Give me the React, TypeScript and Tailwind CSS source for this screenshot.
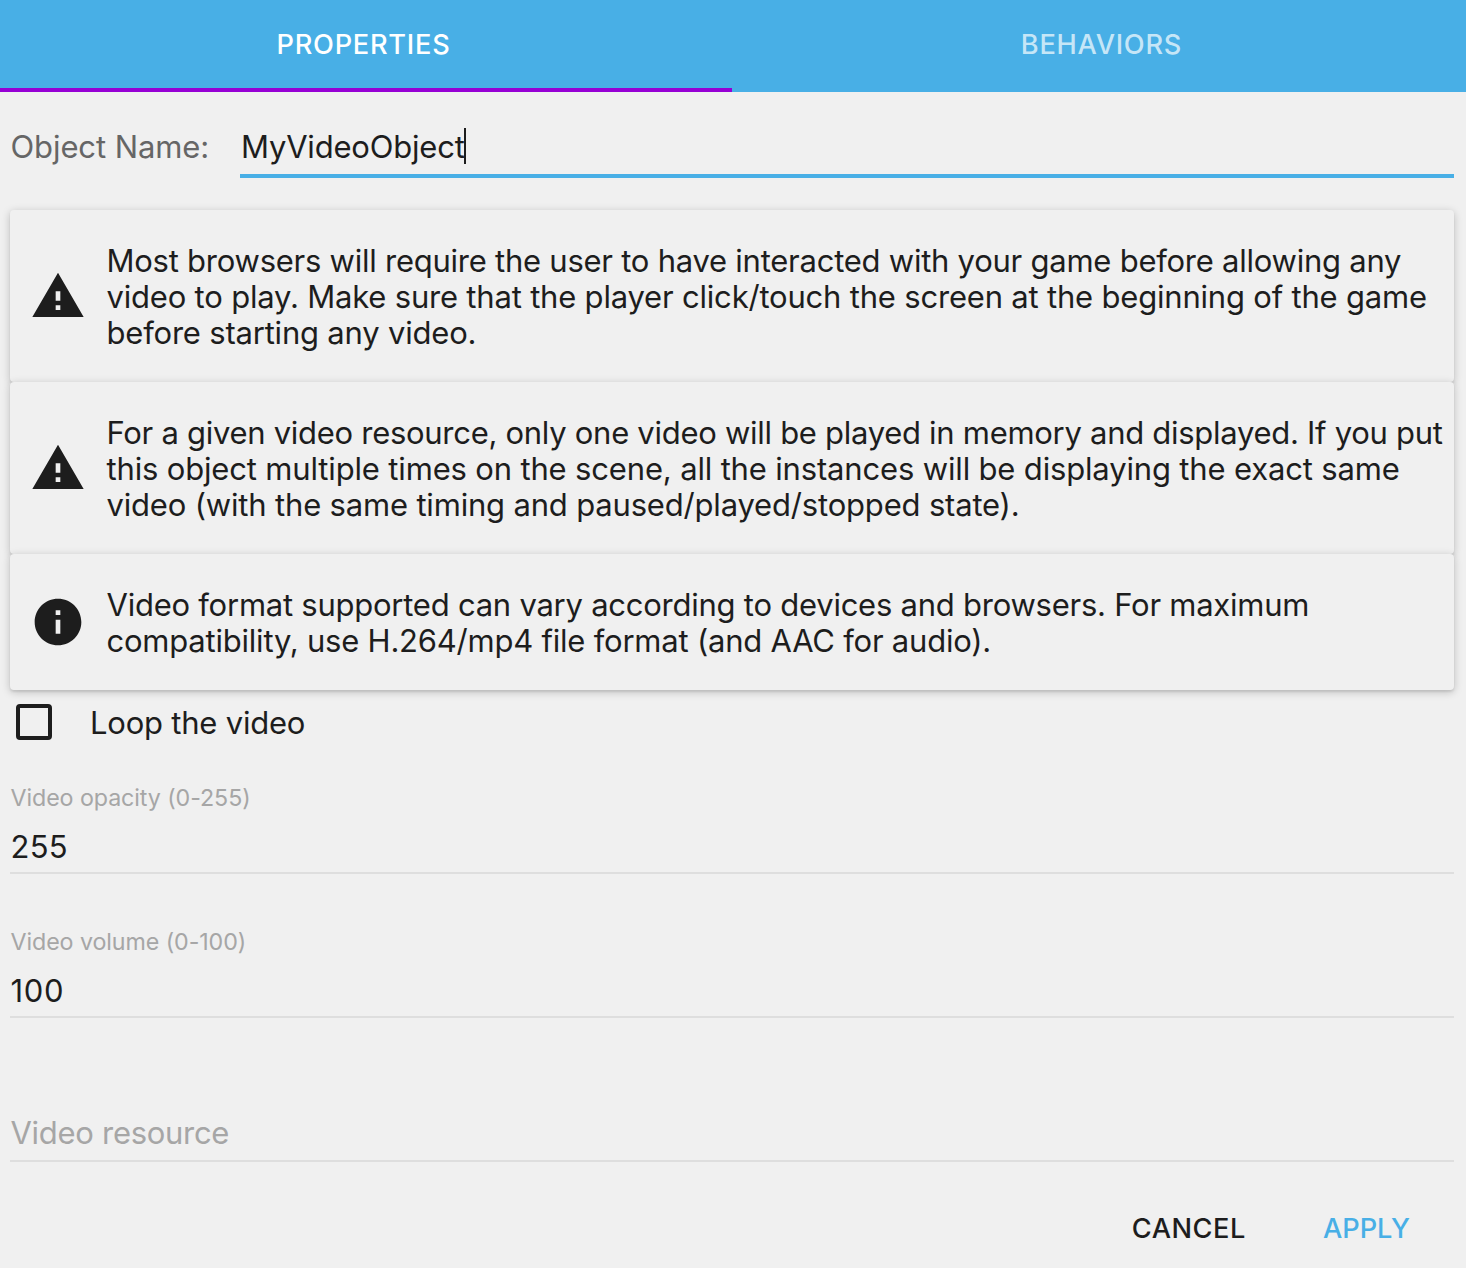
import type { ReactNode } from "react";

const WARNING = "M1 21h22L12 2 1 21zm12-3h-2v-2h2v2zm0-4h-2v-4h2v4z";
const INFO =
  "M12 2C6.48 2 2 6.48 2 12s4.48 10 10 10 10-4.48 10-10S17.52 2 12 2zm1 15h-2v-6h2v6zm0-8h-2V7h2v2z";

function Alert({ icon, children }: { icon: string; children: ReactNode }) {
  return (
    <div className="flex items-center rounded-[4px] bg-[#f0f0f0] pt-[33px] pb-[31px] pl-5 shadow-[0_2px_2px_rgba(0,0,0,0.07),0_2px_8px_rgba(0,0,0,0.22)]">
      <svg viewBox="0 0 24 24" className="-mt-[2px] size-14 shrink-0 fill-[#1d1d1d]">
        <path d={icon} />
      </svg>
      <div className="ml-[20.5px] text-[31px] leading-9 whitespace-nowrap">{children}</div>
    </div>
  );
}

function Field({ label, children }: { label: string; children: ReactNode }) {
  return (
    <label className="block h-36 border-b-2 border-[#dedede] pl-[0.5px]">
      <span className="block pt-[54px] text-[23.25px] leading-[28px] text-[#a6a6a6]">{label}</span>
      <span className="mt-[16px] block text-[31px] leading-[38px]">{children}</span>
    </label>
  );
}

export default function App() {
  return (
    <div className="h-[1268px] w-[1466px] overflow-hidden bg-[#f0f0f0] font-['Inter',sans-serif] text-[#1d1d1d]">
      <div className="flex h-[92px] bg-[#48afe6] text-[27.2px] font-medium">
        <button className="w-[732px] border-b-4 border-[#9600d4] pr-[5px] pt-[3px] tracking-[0.75px] text-white">
          PROPERTIES
        </button>
        <button className="flex-1 pb-px pl-[5px] tracking-[0.75px] text-white/70">BEHAVIORS</button>
      </div>

      <div className="flex h-[118px] pr-3 pl-[10px] text-[31px]">
        <div className="w-[230px] pt-[36px] pl-[0.5px] leading-[38px] tracking-[-0.1px] text-[#666]">
          Object Name:
        </div>
        <div className="flex h-[86px] flex-1 items-start border-b-4 border-[#48afe6] pt-[36px] pl-px">
          <span className="leading-[38px] tracking-[-0.2px]">MyVideoObject</span>
          <span className="-ml-px h-9 w-[2px] bg-[#1d1d1d]" />
        </div>
      </div>

      <div className="pr-3 pl-[10px]">
        <Alert icon={WARNING}>
          <div className="tracking-[-0.245px]">
            Most browsers will require the user to have interacted with your game before allowing any
          </div>
          <div className="tracking-[-0.195px]">
            video to play. Make sure that the player click/touch the screen at the beginning of the game
          </div>
          <div className="tracking-[-0.2px]">before starting any video.</div>
        </Alert>
        <Alert icon={WARNING}>
          <div className="tracking-[-0.285px]">
            For a given video resource, only one video will be played in memory and displayed. If you put
          </div>
          <div className="tracking-[-0.16px]">
            this object multiple times on the scene, all the instances will be displaying the exact same
          </div>
          <div className="tracking-[-0.179px]">video (with the same timing and paused/played/stopped state).</div>
        </Alert>
        <Alert icon={INFO}>
          <div className="tracking-[-0.243px]">
            Video format supported can vary according to devices and browsers. For maximum
          </div>
          <div className="tracking-[-0.22px]">compatibility, use H.264/mp4 file format (and AAC for audio).</div>
        </Alert>

        <div className="flex h-10 items-end pl-[6px]">
          <span className="mb-[-10px] size-9 rounded-[4px] border-4 border-[#1d1d1d]" />
          <span className="mb-[-12px] ml-[38px] text-[31px] leading-[38px] tracking-[-0.22px]">Loop the video</span>
        </div>
        <div className="tracking-[-0.09px]">
          <Field label="Video opacity (0-255)">
            <span className="tracking-[0.3px]">255</span>
          </Field>
          <Field label="Video volume (0-100)">
            <span className="tracking-[0.7px]">100</span>
          </Field>
        </div>
        <div className="h-36 border-b-2 border-[#dedede] pt-[96px] pl-[0.5px] text-[31px] leading-[38px] tracking-[-0.29px] text-[#a6a6a6]">
          Video resource
        </div>
      </div>

      <div className="flex justify-end pt-[50px] pr-[56px] text-[27.2px] leading-[34px] font-medium">
        <button className="tracking-[0.55px]">CANCEL</button>
        <button className="ml-[77px] tracking-[0px] text-[#48afe6]">APPLY</button>
      </div>
    </div>
  );
}
